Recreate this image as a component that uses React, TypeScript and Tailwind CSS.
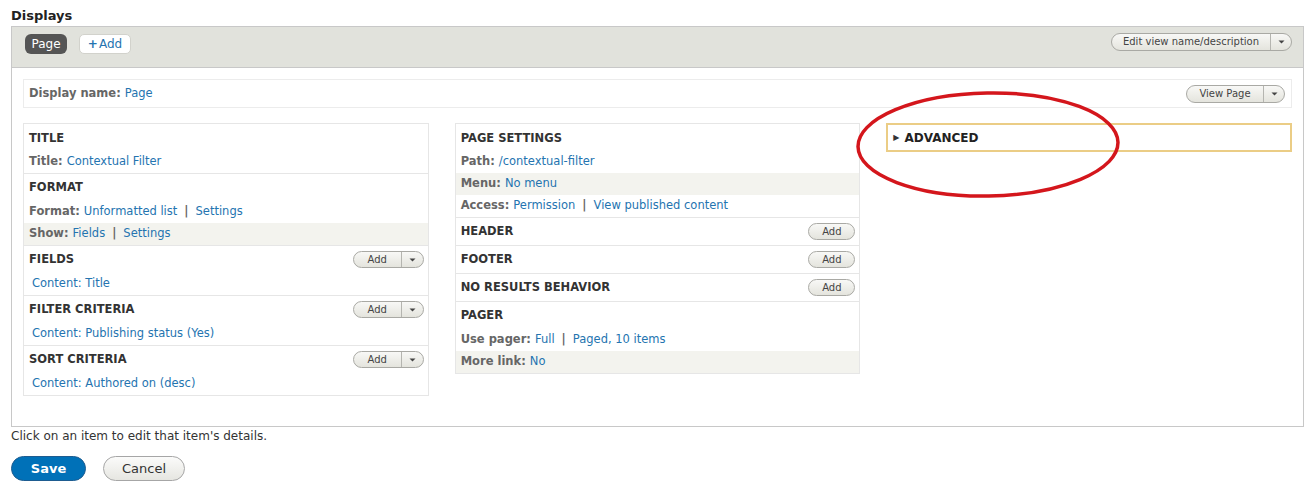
import React from "react";

const link = "text-[#2474b0]";

function Caret() {
  return (
    <svg width="7" height="4" viewBox="0 0 7 4" className="block">
      <path d="M0.5 0.5 L6.5 0.5 L3.5 3.5 Z" fill="#444" />
    </svg>
  );
}

function DropButton({
  label,
  width,
  mainWidth,
  height = 17,
  split = true,
}: {
  label: string;
  width: number;
  mainWidth: number;
  height?: number;
  split?: boolean;
}) {
  return (
    <div
      className="flex shrink-0 overflow-hidden rounded-full border border-[#a9a9a4] bg-gradient-to-b from-[#f8f8f6] to-[#e4e4dd] text-[10px] leading-none text-[#444]"
      style={{ width, height }}
    >
      <span className="flex items-center justify-center" style={{ width: split ? mainWidth : "100%" }}>
        {label}
      </span>
      {split ? (
        <span className="flex flex-1 items-center justify-center border-l border-[#b5b5b0]">
          <Caret />
        </span>
      ) : null}
    </div>
  );
}

function Sep() {
  return <span className="mx-[7px] font-bold text-[#666]">|</span>;
}

function Row({ label, gray, indent, children }: { label?: string; gray?: boolean; indent?: boolean; children: React.ReactNode }) {
  return (
    <div className={`flex h-[22px] items-center text-[11.5px] ${indent ? "pl-[8px]" : "pl-[5px]"} ${gray ? "bg-[#f3f3ee]" : ""}`}>
      {label ? <span className="mr-[4px] font-bold text-[#666]">{label}</span> : null}
      {children}
    </div>
  );
}

function Bucket({
  title,
  button,
  last,
  first,
  children,
}: {
  title: string;
  button?: "split" | "single";
  last?: boolean;
  first?: boolean;
  children?: React.ReactNode;
}) {
  return (
    <div className={last ? "" : "border-b border-[#e6e6e6]"}>
      <div className={`flex h-[27px] items-center justify-between pl-[5px] pr-[4px] ${first ? "pt-[3px]" : ""}`}>
        <span className="text-[11.5px] font-bold text-[#333]">{title}</span>
        {button === "split" ? <DropButton label="Add" width={71} mainWidth={47} /> : null}
        {button === "single" ? <DropButton label="Add" width={47} mainWidth={47} split={false} /> : null}
      </div>
      {children}
    </div>
  );
}

export default function App() {
  return (
    <div className="relative min-h-[488px] bg-white font-['DejaVu_Sans',sans-serif] text-[#333]">
      <div className="pl-[11px] pr-[7px] pt-[5px]">
        <h2 className="text-[13px] font-bold leading-[21px] text-[#222]">Displays</h2>

        <div className="h-[401px] border border-[#c8c8c8]">
          <div className="flex h-[41px] items-start justify-between border-b border-[#c8c8c8] bg-[#e1e2dc] pl-[13px] pr-[11px]">
            <div className="mt-[7px] flex items-center gap-[12px]">
              <span className="flex h-[20px] w-[42px] items-center justify-center rounded-[6px] bg-[#555] text-[12px] text-white">
                Page
              </span>
              <span className={`flex h-[20px] w-[52px] items-center justify-center rounded-[5px] border border-[#d2d2cc] bg-white text-[12px] ${link}`}>
                <span className="mr-[1px] font-bold">+</span>Add
              </span>
            </div>
            <div className="mt-[6px]">
              <DropButton label="Edit view name/description" width={181} mainWidth={158} height={18} />
            </div>
          </div>

          <div className="px-[11px] pt-[11px]">
            <div className="flex h-[29px] items-center justify-between border border-[#ececec] pl-[5px] pr-[6px]">
              <span className="text-[11.5px]">
                <span className="mr-[4px] font-bold text-[#666]">Display name:</span>
                <span className={link}>Page</span>
              </span>
              <DropButton label="View Page" width={99} mainWidth={76} height={18} />
            </div>

            <div className="mt-[15px] grid grid-cols-3 items-start gap-[26px]">
              <div className="border border-[#e6e6e6]">
                <Bucket title="TITLE" first>
                  <Row label="Title:">
                    <span className={link}>Contextual Filter</span>
                  </Row>
                </Bucket>
                <Bucket title="FORMAT">
                  <Row label="Format:">
                    <span className={link}>Unformatted list</span>
                    <Sep />
                    <span className={link}>Settings</span>
                  </Row>
                  <Row label="Show:" gray>
                    <span className={link}>Fields</span>
                    <Sep />
                    <span className={link}>Settings</span>
                  </Row>
                </Bucket>
                <Bucket title="FIELDS" button="split">
                  <Row indent>
                    <span className={link}>Content: Title</span>
                  </Row>
                </Bucket>
                <Bucket title="FILTER CRITERIA" button="split">
                  <Row indent>
                    <span className={link}>Content: Publishing status (Yes)</span>
                  </Row>
                </Bucket>
                <Bucket title="SORT CRITERIA" button="split" last>
                  <Row indent>
                    <span className={link}>Content: Authored on (desc)</span>
                  </Row>
                </Bucket>
              </div>

              <div className="border border-[#e6e6e6]">
                <Bucket title="PAGE SETTINGS" first>
                  <Row label="Path:">
                    <span className={link}>/contextual-filter</span>
                  </Row>
                  <Row label="Menu:" gray>
                    <span className={link}>No menu</span>
                  </Row>
                  <Row label="Access:">
                    <span className={link}>Permission</span>
                    <Sep />
                    <span className={link}>View published content</span>
                  </Row>
                </Bucket>
                <Bucket title="HEADER" button="single" />
                <Bucket title="FOOTER" button="single" />
                <Bucket title="NO RESULTS BEHAVIOR" button="single" />
                <Bucket title="PAGER" last>
                  <Row label="Use pager:">
                    <span className={link}>Full</span>
                    <Sep />
                    <span className={link}>Paged, 10 items</span>
                  </Row>
                  <Row label="More link:" gray>
                    <span className={link}>No</span>
                  </Row>
                </Bucket>
              </div>

              <div className="flex h-[29px] items-center border-2 border-[#ebcd86] pl-[5px]">
                <span className="mr-[5px] text-[8px] text-[#333]">▶</span>
                <span className="text-[12px] font-bold text-[#222]">ADVANCED</span>
              </div>
            </div>
          </div>
        </div>

        <p className="mt-[1px] text-[12px] leading-[16px] text-[#333]">Click on an item to edit that item's details.</p>

        <div className="mt-[12px] flex items-center gap-[17px]">
          <button className="flex h-[25px] w-[75px] items-center justify-center rounded-full border border-[#1e5c90] bg-[#0071b8] text-[13px] font-bold text-white">
            Save
          </button>
          <button className="flex h-[25px] w-[82px] items-center justify-center rounded-full border border-[#a6a6a6] bg-gradient-to-b from-[#fbfbfa] to-[#e6e6e1] text-[13px] text-[#333]">
            Cancel
          </button>
        </div>
      </div>

      <svg className="pointer-events-none absolute left-[850px] top-[86px]" width="280" height="120" viewBox="0 0 280 120">
        <ellipse cx="138" cy="58.5" rx="130" ry="51.5" fill="none" stroke="#d4161c" strokeWidth="3.5" transform="rotate(-1 138 58.5)" />
      </svg>
    </div>
  );
}
